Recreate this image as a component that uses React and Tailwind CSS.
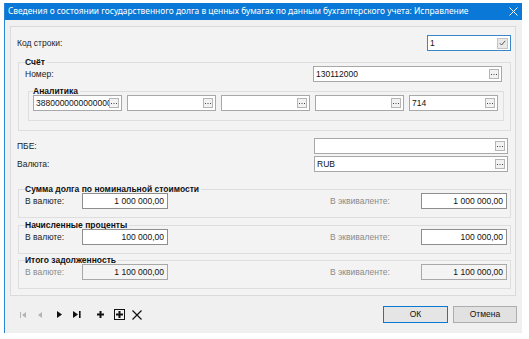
import React from "react";

const FONT = { fontFamily: '"Liberation Sans", Arial, sans-serif' };

// маленькая кнопка "..." справа в поле
function Dots() {
  return (
    <div className="flex h-[10px] w-[10px] shrink-0 items-end justify-center border border-[#b5b5b5] bg-[#f2f2f2] pb-[2px]">
      <svg width="6" height="2" viewBox="0 0 6 2">
        <rect x="0" y="0" width="1" height="1" fill="#444" />
        <rect x="2.5" y="0" width="1" height="1" fill="#444" />
        <rect x="5" y="0" width="1" height="1" fill="#444" />
      </svg>
    </div>
  );
}

function LookupInput({ value = "", className = "" }) {
  return (
    <div
      className={`flex h-[16px] items-center overflow-hidden border border-[#a8a8a8] bg-white pl-[2px] pr-[2px] ${className}`}
    >
      <span className="flex-1 overflow-hidden whitespace-nowrap text-[8.5px] leading-none text-[#111]">
        {value}
      </span>
      <Dots />
    </div>
  );
}

function AmountInput({ value, disabled = false }) {
  return (
    <div
      className={`flex h-[16px] w-[86px] items-center justify-end border pr-[3px] text-[8.5px] leading-none text-[#111] ${
        disabled ? "border-[#a8a8a8] bg-[#f4f4f4]" : "border-[#8e8e8e] bg-white"
      }`}
    >
      {value}
    </div>
  );
}

// заголовок группы, закрывает линию рамки
function Caption({ children, className = "" }) {
  return (
    <div
      className={`-mt-[6px] h-[10px] w-fit bg-[#f3f3f3] pr-[2px] text-[8.5px] font-bold leading-[10px] text-[#111] ${className}`}
    >
      {children}
    </div>
  );
}

function AmountGroup({ title, cur, eq, disabled = false, className = "" }) {
  return (
    <div className={`ml-[7px] mr-[4px] flex h-[29px] flex-col border border-[#dedede] ${className}`}>
      <Caption className="ml-[6px]">{title}</Caption>
      <div className="mt-[-1px] flex items-center pl-[6px] pr-[2px]">
        <span
          className={`w-[57px] text-[8.5px] ${disabled ? "text-[#8a8a8a]" : "text-[#222]"}`}
        >
          В валюте:
        </span>
        <AmountInput value={cur} disabled={disabled} />
        <span className="ml-[162px] w-[91px] text-[8.5px] text-[#8a8a8a]">В эквиваленте:</span>
        <AmountInput value={eq} disabled={disabled} />
      </div>
    </div>
  );
}

function NavIcons() {
  return (
    <div className="flex items-center">
      {/* в начало */}
      <svg width="7" height="6" viewBox="0 0 7 6" className="ml-[15px]">
        <rect x="0" y="0" width="1" height="6" fill="#b4b4b4" />
        <path d="M6 0 L2 3 L6 6 Z" fill="#b4b4b4" />
      </svg>
      {/* назад */}
      <svg width="4" height="6" viewBox="0 0 4 6" className="ml-[11px]">
        <path d="M4 0 L0 3 L4 6 Z" fill="#b4b4b4" />
      </svg>
      {/* вперёд */}
      <svg width="5" height="7" viewBox="0 0 5 7" className="ml-[15px]">
        <path d="M0 0 L5 3.5 L0 7 Z" fill="#111" />
      </svg>
      {/* в конец */}
      <svg width="8" height="7" viewBox="0 0 8 7" className="ml-[11px]">
        <path d="M0 0 L5 3.5 L0 7 Z" fill="#111" />
        <rect x="6" y="0" width="1.6" height="7" fill="#111" />
      </svg>
      {/* добавить */}
      <svg width="7" height="7" viewBox="0 0 7 7" className="ml-[16px]">
        <path d="M2.5 0 H4.5 V2.5 H7 V4.5 H4.5 V7 H2.5 V4.5 H0 V2.5 H2.5 Z" fill="#111" />
      </svg>
      {/* копировать */}
      <svg width="11" height="11" viewBox="0 0 11 11" className="ml-[10px]">
        <rect x="0.5" y="0.5" width="10" height="10" fill="none" stroke="#111" />
        <path d="M4.5 2 H6.5 V4.5 H9 V6.5 H6.5 V9 H4.5 V6.5 H2 V4.5 H4.5 Z" fill="#111" />
      </svg>
      {/* удалить */}
      <svg width="10" height="10" viewBox="0 0 10 10" className="ml-[7px]">
        <path d="M0.5 0.5 L9.5 9.5 M9.5 0.5 L0.5 9.5" stroke="#111" strokeWidth="1.2" />
      </svg>
    </div>
  );
}

export default function App() {
  return (
    <div className="h-[339px] w-[529px] overflow-hidden bg-white pl-[4px] pt-[3px]" style={FONT}>
      <div className="flex h-[330px] w-[518px] flex-col border-l border-[#2a85d6] bg-[#f0f0f0]">
        {/* заголовок окна */}
        <div className="flex h-[17px] shrink-0 items-center justify-between bg-[#0a78d6] pl-[3px] pr-[4px] text-white">
          <span
            className="whitespace-nowrap text-[8.4px] leading-none"
            style={{ fontFamily: '"Noto Sans", "Open Sans", sans-serif' }}
          >
            Сведения о состоянии государственного долга в ценных бумагах по данным бухгалтерского учета: Исправление
          </span>
          <svg width="9" height="9" viewBox="0 0 9 9">
            <path d="M0.5 0.5 L8.5 8.5 M8.5 0.5 L0.5 8.5" stroke="#fff" strokeWidth="1" />
          </svg>
        </div>

        {/* основная панель */}
        <div className="ml-[5px] mt-[6px] flex h-[270px] w-[506px] flex-col border border-[#dadada] bg-[#f3f3f3]">
          {/* Код строки */}
          <div className="mt-[8px] flex h-[16px] items-center pl-[6px] pr-[4px]">
            <span className="flex-1 text-[8.5px] text-[#222]">Код строки:</span>
            <div className="flex h-[16px] w-[84px] items-center border border-[#3b86c8] bg-white pl-[2px] pr-[2px]">
              <span className="flex-1 text-[8.5px] leading-none text-[#111]">1</span>
              <div className="flex h-[11px] w-[11px] items-center justify-center border border-[#c4c4c4] bg-[#e9e9e9]">
                <svg width="7" height="6" viewBox="0 0 7 6">
                  <path d="M0.8 3.2 L2.6 5 L6.2 0.8" fill="none" stroke="#555" strokeWidth="1" />
                </svg>
              </div>
            </div>
          </div>

          {/* Счёт */}
          <div className="ml-[7px] mr-[4px] mt-[11px] flex h-[69px] flex-col border border-[#dedede]">
            <Caption className="ml-[6px]">Счёт</Caption>
            <div className="mt-[-1px] flex h-[16px] items-center pl-[6px]">
              <span className="w-[288px] text-[8.5px] text-[#222]">Номер:</span>
              <LookupInput value="130112000" className="w-[189px]" />
            </div>
            <div className="ml-[9px] mr-[6px] mt-[9px] flex h-[30px] flex-col border border-[#dedede]">
              <Caption className="ml-[4px]">Аналитика</Caption>
              <div className="mt-[-1px] flex h-[16px] items-center gap-[5px] pl-[4px]">
                <LookupInput value="38800000000000000000" className="w-[89px]" />
                <LookupInput className="w-[89px]" />
                <LookupInput className="w-[89px]" />
                <LookupInput className="w-[89px]" />
                <LookupInput value="714" className="w-[89px]" />
              </div>
            </div>
          </div>

          {/* ПБЕ, Валюта */}
          <div className="mt-[7px] flex h-[16px] items-center pl-[6px]">
            <span className="w-[297px] text-[8.5px] text-[#222]">ПБЕ:</span>
            <LookupInput className="w-[194px]" />
          </div>
          <div className="mt-[2px] flex h-[16px] items-center pl-[6px]">
            <span className="w-[297px] text-[8.5px] text-[#222]">Валюта:</span>
            <LookupInput value="RUB" className="w-[194px]" />
          </div>

          <AmountGroup
            title="Сумма долга по номинальной стоимости"
            cur="1 000 000,00"
            eq="1 000 000,00"
            className="mt-[17px]"
          />
          <AmountGroup
            title="Начисленные проценты"
            cur="100 000,00"
            eq="100 000,00"
            className="mt-[7px]"
          />
          <AmountGroup
            title="Итого задолженность"
            cur="1 100 000,00"
            eq="1 100 000,00"
            disabled
            className="mt-[6px]"
          />
        </div>

        {/* нижняя панель */}
        <div className="flex flex-1 items-center pr-[5px]">
          <NavIcons />
          <div className="ml-auto flex gap-[5px]">
            <button className="flex h-[17px] w-[65px] items-center justify-center border border-[#0a78d6] bg-[#e5e5e5] text-[8.5px] text-[#111]">
              ОК
            </button>
            <button className="flex h-[17px] w-[64px] items-center justify-center border border-[#adadad] bg-[#e1e1e1] text-[8.5px] text-[#111]">
              Отмена
            </button>
          </div>
        </div>
      </div>
    </div>
  );
}
